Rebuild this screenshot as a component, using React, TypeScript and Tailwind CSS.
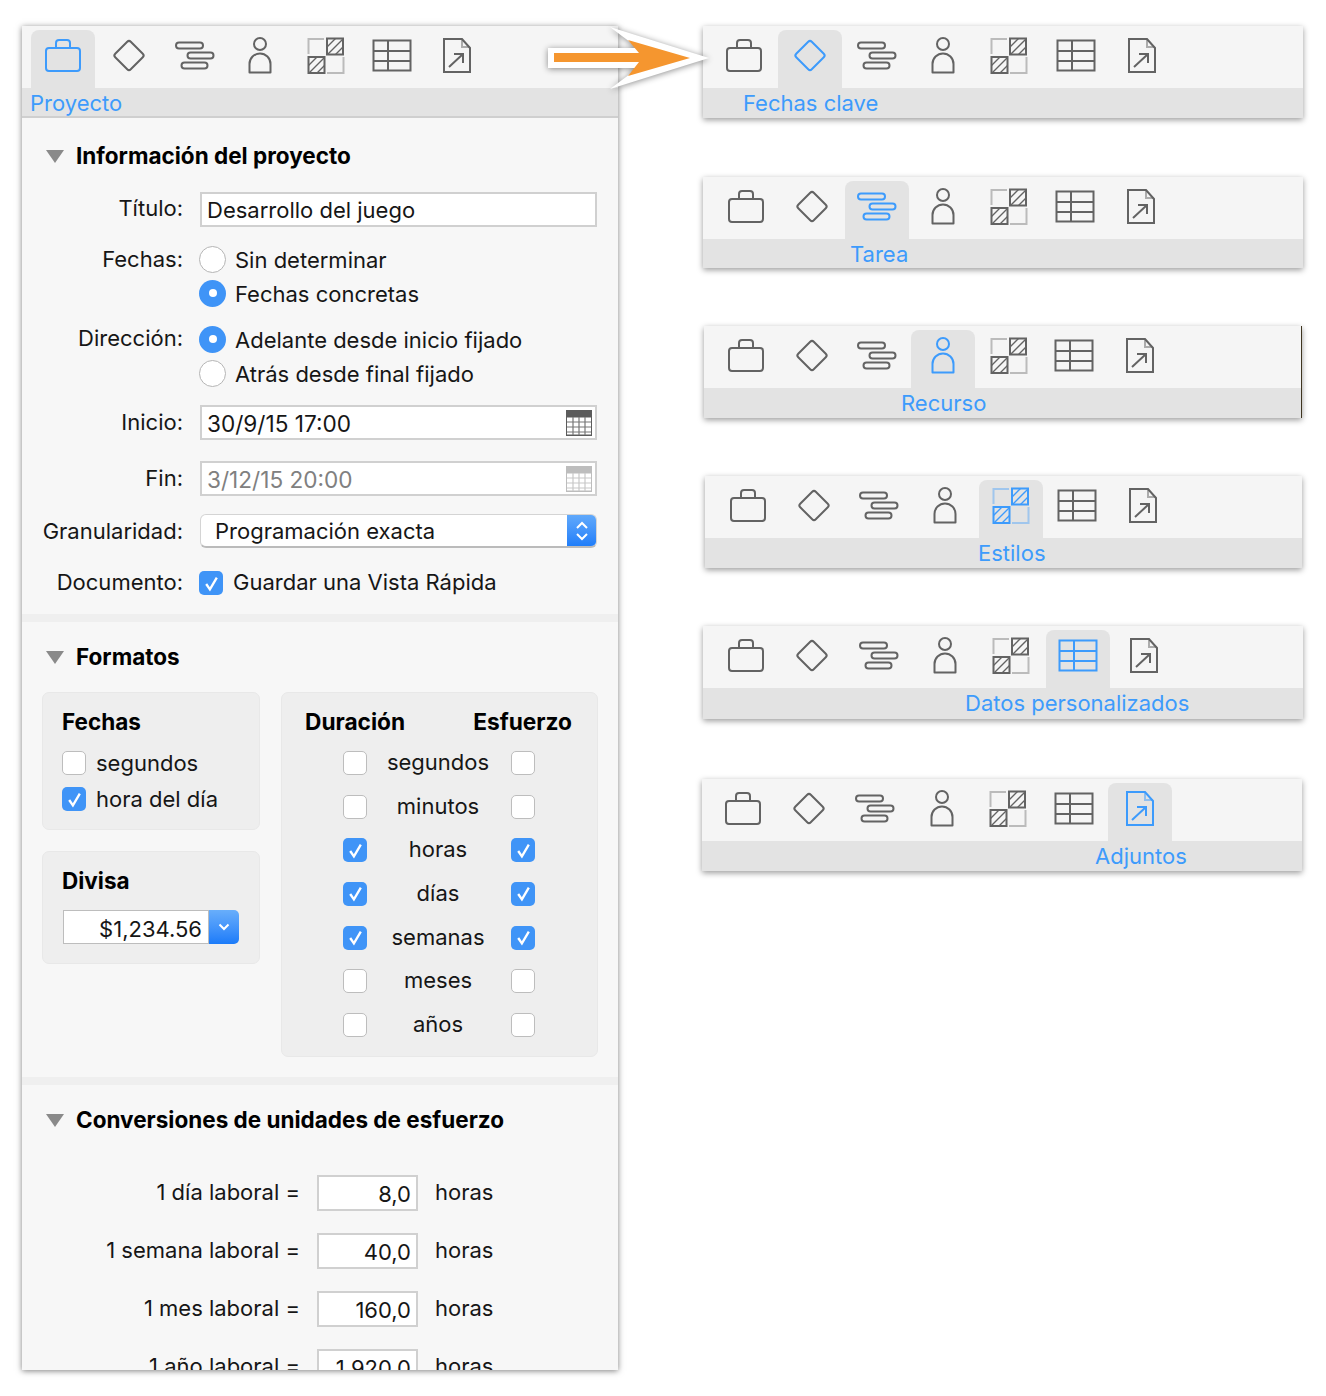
import React from 'react';

const BLUE = '#3d9bfc';
const GREY = '#636363';

const Briefcase = ({ c }: { c: string }) => (
  <svg width="40" height="40" viewBox="0 0 40 40" fill="none" stroke={c} strokeWidth="2">
    <rect x="3" y="12" width="34" height="23" rx="3" />
    <path d="M13 12V7a3 3 0 0 1 3-3h8a3 3 0 0 1 3 3v5" />
  </svg>
);
const Diamond = ({ c }: { c: string }) => (
  <svg width="40" height="40" viewBox="0 0 40 40" fill="none" stroke={c} strokeWidth="2">
    <rect x="9" y="8.5" width="22" height="22" rx="2.5" transform="rotate(45 20 19.5)" />
  </svg>
);
const Gantt = ({ c }: { c: string }) => (
  <svg width="40" height="40" viewBox="0 0 40 40" fill="none" stroke={c} strokeWidth="2">
    <rect x="1" y="6.5" width="27" height="6" rx="3" />
    <rect x="12.5" y="16.5" width="26" height="6" rx="3" />
    <rect x="6.5" y="26.5" width="26" height="6" rx="3" />
  </svg>
);
const Person = ({ c }: { c: string }) => (
  <svg width="40" height="40" viewBox="0 0 40 40" fill="none" stroke={c} strokeWidth="2">
    <circle cx="20" cy="8" r="6" />
    <path d="M9.5 36.5V28a10.5 10.5 0 0 1 21 0v8.500z" strokeLinejoin="round" />
  </svg>
);
const Styles = ({ c }: { c: string }) => (
  <svg width="40" height="40" viewBox="0 0 40 40" fill="none" stroke={c} strokeWidth="2">
    <path d="M2.500 18V3H18M37.500 21V37H21" strokeOpacity="0.4" />
    <rect x="21" y="2.500" width="16" height="16" />
    <rect x="2.500" y="21" width="16" height="16" />
    <path d="M21 11l8.500-8.500M21.500 18.500l15.500-15.500M29.500 18.500l7.500-7.500M2.500 29.500L11 21M3 37l15.500-15.500M11 37l7.500-7.500" strokeWidth="1.400" />
  </svg>
);
const TableIcon = ({ c }: { c: string }) => (
  <svg width="40" height="40" viewBox="0 0 40 40" fill="none" stroke={c} strokeWidth="2">
    <rect x="1.500" y="4.500" width="37" height="30" />
    <path d="M1.500 15h37M1.500 25h37M16 4.500v30" />
  </svg>
);
const Attach = ({ c }: { c: string }) => (
  <svg width="40" height="40" viewBox="0 0 40 40" fill="none" stroke={c} strokeWidth="2">
    <path d="M7 3h18l8 9v24H7z" />
    <path d="M25 3v8h8" strokeOpacity="0.5" />
    <path d="M12 31l14-13M17 18h9v9" />
  </svg>
);

const ICONS = [Briefcase, Diamond, Gantt, Person, Styles, TableIcon, Attach];

type ToolbarProps = {
  active: number;
  label: string;
  className: string;
  iconsClass: string;
  cellClass: string;
  labelClass: string;
};

const Toolbar = ({ active, label, className, iconsClass, cellClass, labelClass }: ToolbarProps) => (
  <div className={`flex flex-col ${className}`}>
    <div className={`flex h-[62px] pt-[4px] bg-[#f5f5f5] ${iconsClass}`}>
      {ICONS.map((Icon, i) => (
        <div key={i} className={`h-[58px] shrink-0 flex justify-center ${cellClass}`}>
          <div className={`w-[64px] h-[58px] rounded-t-[8px] flex justify-center pt-[6px] ${i === active ? 'bg-[#e3e3e3]' : ''}`}>
            <Icon c={i === active ? BLUE : GREY} />
          </div>
        </div>
      ))}
    </div>
    <div className={`flex-1 bg-[#e3e3e3] text-[22px] pt-[3px] leading-[25px] text-[#3d9bfc] ${labelClass}`}>{label}</div>
  </div>
);

const Check = ({ on }: { on?: boolean }) =>
  on ? (
    <span className="w-[24px] h-[24px] shrink-0 rounded-[5px] bg-[#3f94f7] flex items-center justify-center">
      <svg width="17" height="17" viewBox="0 0 16 16" fill="none" stroke="#fff" strokeWidth="2.200">
        <path d="M3 8.500l3.500 5L13 2.500" />
      </svg>
    </span>
  ) : (
    <span className="w-[24px] h-[24px] shrink-0 rounded-[5px] bg-white border-[1.500px] border-[#bdbdbd]" />
  );

const Radio = ({ on }: { on?: boolean }) =>
  on ? (
    <span className="w-[27px] h-[27px] shrink-0 rounded-full bg-[#3f94f7] flex items-center justify-center">
      <span className="w-[8px] h-[8px] rounded-full bg-white" />
    </span>
  ) : (
    <span className="w-[27px] h-[27px] shrink-0 rounded-full bg-white border-[1.500px] border-[#b5b5b5]" />
  );

const Triangle = () => (
  <svg width="18" height="13" viewBox="0 0 18 13" className="shrink-0">
    <path d="M0 0h18L9 13z" fill="#8a8a8a" />
  </svg>
);

const SectionTitle = ({ children, className }: { children: React.ReactNode; className: string }) => (
  <div className={`flex items-center h-[24px] pl-[24px] gap-[12px] ${className}`}>
    <Triangle />
    <span className="font-bold text-[22.500px] text-black whitespace-nowrap">{children}</span>
  </div>
);

const FieldLabel = ({ children }: { children: React.ReactNode }) => (
  <div className="w-[161px] shrink-0 text-right whitespace-nowrap">{children}</div>
);

const CalendarIcon = ({ dim }: { dim?: boolean }) => (
  <svg width="26" height="26" viewBox="0 0 26 26" className={dim ? 'opacity-40' : ''}>
    <rect x="0" y="0" width="26" height="26" fill="#5c5c5c" />
    <rect x="1" y="7.500" width="24" height="17" fill="#fff" />
    <path d="M7 7v18M13 7v18M19 7v18M1 12h24M1 17h24M1 22h24" stroke="#777" strokeWidth="1.200" />
  </svg>
);

const DateField = ({ value, dim }: { value: string; dim?: boolean }) => (
  <div className={`w-[397px] h-[35px] bg-white border-2 border-[#d0d0d0] flex items-center justify-between pl-[5px] pr-[3px] ${dim ? 'text-[#808080]' : ''}`}>
    <span className="text-[22.600px] pt-[2px]">{value}</span>
    <CalendarIcon dim={dim} />
  </div>
);

const UNITS = [
  ['segundos', false, false],
  ['minutos', false, false],
  ['horas', true, true],
  ['días', true, true],
  ['semanas', true, true],
  ['meses', false, false],
  ['años', false, false],
] as const;

const CONVERSIONS = [
  ['1 día laboral =', '8,0'],
  ['1 semana laboral =', '40,0'],
  ['1 mes laboral =', '160,0'],
  ['1 año laboral =', '1.920,0'],
];

const Panel = () => (
  <div className="w-[596px] h-[1344px] shrink-0 overflow-hidden bg-[#f7f7f7] shadow-[0_1px_6px_rgba(0,0,0,0.5)] text-[22px] text-[#161616]">
    <Toolbar
      active={0}
      label="Proyecto"
      className="h-[92px] border-b-2 border-[#cfcfcf]"
      iconsClass="pl-[8.500px]"
      cellClass="w-[65.700px]"
      labelClass="pl-[8px]"
    />

    <SectionTitle className="mt-[26px]">Información del proyecto</SectionTitle>

    <div className="flex items-center mt-[24px] gap-[17px]">
      <div className="pb-[2px]"><FieldLabel>Título:</FieldLabel></div>
      <div className="w-[397px] h-[35px] bg-white border-2 border-[#d0d0d0] flex items-center pl-[5px] pt-[2px]">Desarrollo del juego</div>
    </div>

    <div className="flex mt-[15px] gap-[16px]">
      <div className="h-[34px] leading-[34px]"><FieldLabel>Fechas:</FieldLabel></div>
      <div>
        <div className="flex items-center h-[34px] gap-[9px]"><Radio /><span className="pt-[2px]">Sin determinar</span></div>
        <div className="flex items-center h-[34px] gap-[9px]"><Radio on /><span className="pt-[2px]">Fechas concretas</span></div>
      </div>
    </div>

    <div className="flex mt-[12px] gap-[16px]">
      <div className="h-[34px] leading-[32px]"><FieldLabel>Dirección:</FieldLabel></div>
      <div>
        <div className="flex items-center h-[34px] gap-[9px]"><Radio on /><span className="pt-[2px]">Adelante desde inicio fijado</span></div>
        <div className="flex items-center h-[34px] gap-[9px]"><Radio /><span className="pt-[2px]">Atrás desde final fijado</span></div>
      </div>
    </div>

    <div className="flex items-center mt-[15px] gap-[17px]">
      <FieldLabel>Inicio:</FieldLabel>
      <DateField value="30/9/15 17:00" />
    </div>
    <div className="flex items-center mt-[21px] gap-[17px]">
      <FieldLabel>Fin:</FieldLabel>
      <DateField value="3/12/15 20:00" dim />
    </div>

    <div className="flex items-center mt-[18px] gap-[17px]">
      <FieldLabel>Granularidad:</FieldLabel>
      <div className="w-[397px] h-[34px] bg-white rounded-[6px] border border-[#d4d4d4] border-b-2 border-b-[#bbbbbb] flex items-center justify-between pl-[14px] overflow-hidden">
        <span className="pt-[1px]">Programación exacta</span>
        <span className="w-[29px] h-[34px] bg-gradient-to-b from-[#62aafb] to-[#1a7bf9] flex items-center justify-center">
          <svg width="16" height="24" viewBox="0 0 16 24" fill="none" stroke="#fff" strokeWidth="2">
            <path d="M3 9l5-5 5 5M3 15l5 5 5-5" />
          </svg>
        </span>
      </div>
    </div>

    <div className="flex items-center mt-[23px] h-[24px] gap-[16px]">
      <div className="pb-[1px]"><FieldLabel>Documento:</FieldLabel></div>
      <div className="flex items-center gap-[10px]"><Check on /><span className="pb-[1px]">Guardar una Vista Rápida</span></div>
    </div>

    <div className="mt-[19px] h-[8px] bg-[#efefef]" />

    <SectionTitle className="mt-[23px]">Formatos</SectionTitle>

    <div className="flex mt-[23px] ml-[20px] gap-[21px]">
      <div className="w-[218px] flex flex-col gap-[21px]">
        <div className="h-[138px] bg-[#eeeeee] border border-[#e8e8e8] rounded-[7px] pl-[19px] pt-[13px]">
          <div className="font-bold text-[22.500px] h-[32px] leading-[32px] text-black">Fechas</div>
          <div className="flex items-center gap-[10px] mt-[13px] h-[24px]"><Check /><span>segundos</span></div>
          <div className="flex items-center gap-[10px] mt-[12px] h-[24px]"><Check on /><span>hora del día</span></div>
        </div>
        <div className="h-[113px] bg-[#eeeeee] border border-[#e8e8e8] rounded-[7px] pl-[19px] pt-[13px]">
          <div className="font-bold text-[22.500px] h-[32px] leading-[32px] text-black">Divisa</div>
          <div className="flex mt-[13px] ml-[1px] w-[176px] h-[34px]">
            <div className="w-[146px] bg-white border border-[#bdbdbd] text-right pr-[6px] leading-[36px]">$1,234.56</div>
            <div className="w-[30px] rounded-r-[5px] bg-gradient-to-b from-[#68aefb] to-[#1a7bf9] flex items-center justify-center">
              <svg width="14" height="14" viewBox="0 0 14 14" fill="none" stroke="#fff" strokeWidth="2">
                <path d="M2.500 4.500L7 9l4.500-4.500" />
              </svg>
            </div>
          </div>
        </div>
      </div>

      <div className="w-[317px] h-[365px] bg-[#eeeeee] border border-[#e8e8e8] rounded-[7px] pt-[13px]">
        <div className="flex justify-between font-bold text-[22.700px] h-[32px] leading-[32px] pl-[23px] pr-[25px] text-black">
          <span>Duración</span>
          <span>Esfuerzo</span>
        </div>
        <div className="grid auto-rows-[43.700px] mt-[3px]">
          {UNITS.map(([name, a, b]) => (
            <div key={name} className="flex items-center pl-[61px]">
              <Check on={a} />
              <span className="w-[144px] text-center pr-[2px] pb-[1px]">{name}</span>
              <Check on={b} />
            </div>
          ))}
        </div>
      </div>
    </div>

    <div className="mt-[20px] h-[8px] bg-[#efefef]" />

    <SectionTitle className="mt-[23px]">Conversiones de unidades de esfuerzo</SectionTitle>

    <div className="flex flex-col mt-[43px] gap-[22px]">
      {CONVERSIONS.map(([name, value]) => (
        <div key={name} className="flex items-center h-[36px]">
          <div className="w-[278px] text-right whitespace-nowrap pb-[1px]">{name}</div>
          <div className="ml-[17px] w-[101px] h-[36px] bg-white border-2 border-[#d0d0d0] text-right pr-[5px] leading-[35px]">{value}</div>
          <div className="ml-[17px] pb-[1px]">horas</div>
        </div>
      ))}
    </div>
  </div>
);

const Strips = () => (
  <div className="flex flex-col ml-[85px]">
    <Toolbar active={1} label="Fechas clave" className="w-[600px] h-[92px] shadow-[0_2px_6px_rgba(0,0,0,0.4)]" iconsClass="pl-[8px]" cellClass="w-[66.300px]" labelClass="pl-[40px]" />
    <Toolbar active={2} label="Tarea" className="w-[600px] h-[91px] mt-[59px] shadow-[0_2px_6px_rgba(0,0,0,0.4)]" iconsClass="pl-[10px]" cellClass="w-[65.800px]" labelClass="pl-[147px]" />
    <Toolbar active={3} label="Recurso" className="w-[598px] h-[92px] mt-[58px] ml-[1px] border-r border-[#3f3520] shadow-[0_2px_6px_rgba(0,0,0,0.4)]" iconsClass="pl-[9px]" cellClass="w-[65.700px]" labelClass="pl-[197px]" />
    <Toolbar active={4} label="Estilos" className="w-[597px] h-[92px] mt-[58px] ml-[2px] shadow-[0_2px_6px_rgba(0,0,0,0.4)]" iconsClass="pl-[10px]" cellClass="w-[65.800px]" labelClass="pl-[273px]" />
    <Toolbar active={5} label="Datos personalizados" className="w-[600px] h-[93px] mt-[58px] shadow-[0_2px_6px_rgba(0,0,0,0.4)]" iconsClass="pl-[10px]" cellClass="w-[66.300px]" labelClass="pl-[262px]" />
    <Toolbar active={6} label="Adjuntos" className="w-[600px] h-[92px] mt-[60px] -ml-[1px] shadow-[0_2px_6px_rgba(0,0,0,0.4)]" iconsClass="pl-[8px]" cellClass="w-[66.200px]" labelClass="pl-[393px]" />
  </div>
);

export default function App() {
  return (
    <div className="relative h-[1396px] bg-white overflow-hidden flex items-start pl-[22px] pt-[26px] font-['Inter',sans-serif]">
      <Panel />
      <Strips />
      {/* callout arrow between the panel and the first strip */}
      <svg width="180" height="80" viewBox="0 0 180 80" className="absolute left-[540px] top-[18px] drop-shadow-[0_1px_3px_rgba(0,0,0,0.45)]">
        <path d="M8 30h90L70 9l99 31-99 31 28-21H8z" fill="#fff" />
        <path d="M14 35h85L88 22l62 18-62 18 11-14H14z" fill="#f5962f" />
      </svg>
    </div>
  );
}
